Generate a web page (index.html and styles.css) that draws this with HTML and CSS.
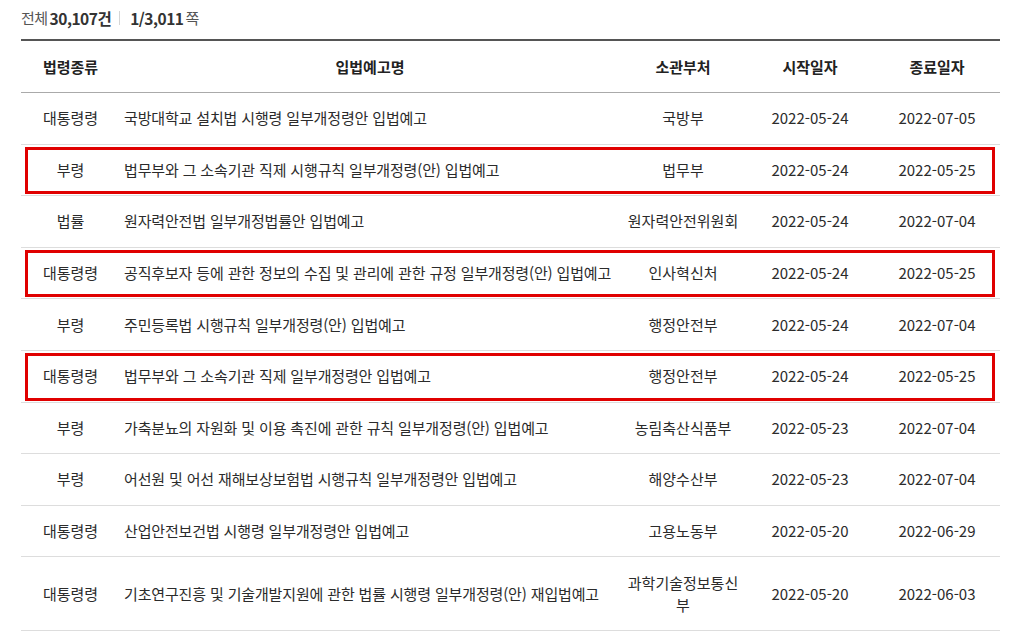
FILE: index.html
```html
<!DOCTYPE html>
<html lang="ko">
<head>
<meta charset="utf-8">
<title>입법예고 목록</title>
<link rel="stylesheet" href="styles.css">
</head>
<body>
<div class="wrap">
  <div class="summary">
    <span class="label">전체</span><strong>30,107건</strong>
    <span class="bar"></span>
    <strong>1/3,011</strong><span class="label">쪽</span>
  </div>
  <div class="table">
    <div class="row head">
      <div class="c">법령종류</div>
      <div class="c">입법예고명</div>
      <div class="c">소관부처</div>
      <div class="c">시작일자</div>
      <div class="c">종료일자</div>
    </div>
    <div class="row">
      <div class="c">대통령령</div>
      <div class="c title">국방대학교 설치법 시행령 일부개정령안 입법예고</div>
      <div class="c dept">국방부</div>
      <div class="c">2022-05-24</div>
      <div class="c">2022-07-05</div>
    </div>
    <div class="row mark">
      <div class="c">부령</div>
      <div class="c title">법무부와 그 소속기관 직제 시행규칙 일부개정령(안) 입법예고</div>
      <div class="c dept">법무부</div>
      <div class="c">2022-05-24</div>
      <div class="c">2022-05-25</div>
    </div>
    <div class="row">
      <div class="c">법률</div>
      <div class="c title">원자력안전법 일부개정법률안 입법예고</div>
      <div class="c dept">원자력안전위원회</div>
      <div class="c">2022-05-24</div>
      <div class="c">2022-07-04</div>
    </div>
    <div class="row mark">
      <div class="c">대통령령</div>
      <div class="c title">공직후보자 등에 관한 정보의 수집 및 관리에 관한 규정 일부개정령(안) 입법예고</div>
      <div class="c dept">인사혁신처</div>
      <div class="c">2022-05-24</div>
      <div class="c">2022-05-25</div>
    </div>
    <div class="row">
      <div class="c">부령</div>
      <div class="c title">주민등록법 시행규칙 일부개정령(안) 입법예고</div>
      <div class="c dept">행정안전부</div>
      <div class="c">2022-05-24</div>
      <div class="c">2022-07-04</div>
    </div>
    <div class="row mark">
      <div class="c">대통령령</div>
      <div class="c title">법무부와 그 소속기관 직제 일부개정령안 입법예고</div>
      <div class="c dept">행정안전부</div>
      <div class="c">2022-05-24</div>
      <div class="c">2022-05-25</div>
    </div>
    <div class="row">
      <div class="c">부령</div>
      <div class="c title">가축분뇨의 자원화 및 이용 촉진에 관한 규칙 일부개정령(안) 입법예고</div>
      <div class="c dept">농림축산식품부</div>
      <div class="c">2022-05-23</div>
      <div class="c">2022-07-04</div>
    </div>
    <div class="row">
      <div class="c">부령</div>
      <div class="c title">어선원 및 어선 재해보상보험법 시행규칙 일부개정령안 입법예고</div>
      <div class="c dept">해양수산부</div>
      <div class="c">2022-05-23</div>
      <div class="c">2022-07-04</div>
    </div>
    <div class="row">
      <div class="c">대통령령</div>
      <div class="c title">산업안전보건법 시행령 일부개정령안 입법예고</div>
      <div class="c dept">고용노동부</div>
      <div class="c">2022-05-20</div>
      <div class="c">2022-06-29</div>
    </div>
    <div class="row">
      <div class="c">대통령령</div>
      <div class="c title">기초연구진흥 및 기술개발지원에 관한 법률 시행령 일부개정령(안) 재입법예고</div>
      <div class="c dept">과학기술정보통신부</div>
      <div class="c">2022-05-20</div>
      <div class="c">2022-06-03</div>
    </div>
  </div>
</div>
</body>
</html>
```

FILE: styles.css
```css
* { box-sizing: border-box; }
html, body { margin: 0; padding: 0; background: #fff; }
body {
  font-family: "Noto Sans CJK KR", "Noto Sans", sans-serif;
  font-size: 15px;
  color: #2b2b2b;
}
.wrap {
  width: 979px;
  margin-left: 21px;
}
.summary {
  height: 39px;
  display: flex;
  align-items: center;
  font-size: 15px;
  padding-bottom: 4px;
  letter-spacing: -0.5px;
}
.summary .label { color: #555; font-weight: 400; }
.summary strong { font-weight: 700; color: #333; font-size: 15.5px; }
.summary .label + strong { margin-left: 2px; }
.summary strong + .label { margin-left: 2px; }
.summary .bar {
  display: inline-block;
  width: 1px;
  height: 14px;
  background: #d5d5d5;
  margin: 0 10px 0 8px;
}
.table {
  border-top: 2px solid #555;
}
.row {
  position: relative;
  display: grid;
  grid-template-columns: 99px 500px 126px 128px 126px;
  align-items: center;
  border-bottom: 1px solid #ddd;
}
.row .c {
  padding: 14.3px 5px;
  line-height: 22px;
  text-align: center;
}
.row .c.title {
  text-align: left;
  padding-left: 4px;
  padding-right: 0;
  white-space: nowrap;
  letter-spacing: -0.15px;
}
.row .c.dept {
  padding-left: 2px;
  padding-right: 2px;
}
.row.head {
  border-bottom: 1px solid #aaa;
}
.row.head .c {
  font-size: 15px;
  font-weight: 700;
  color: #222;
  padding-top: 14.5px;
  padding-bottom: 14.5px;
  letter-spacing: 0;
}
.row.head .c.title {
  text-align: center;
}
.row.mark::after {
  content: "";
  position: absolute;
  left: 4px;
  right: 5px;
  top: 2px;
  bottom: 1px;
  border: 3px solid #e00000;
  pointer-events: none;
}
```
